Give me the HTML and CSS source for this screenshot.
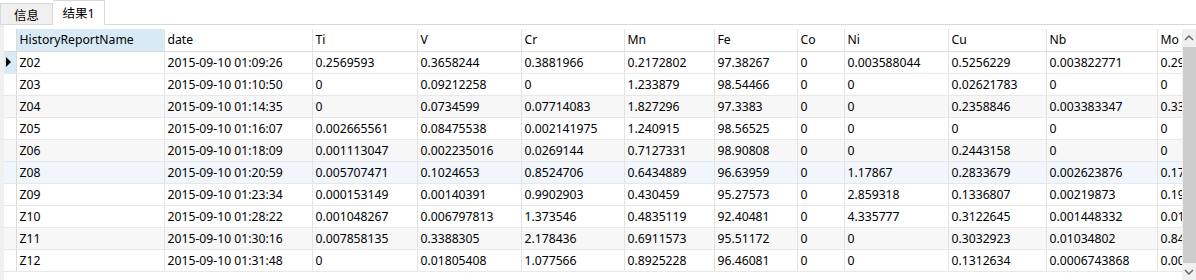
FILE: index.html
```html
<!DOCTYPE html>
<html lang="zh-CN">
<head>
  <meta charset="UTF-8" />
  <title>结果1</title>
  <link rel="stylesheet" href="styles.css">
</head>
<body>

  <div class="tabs">
    <div class="tab">信息</div>
    <div class="tab active">结果1</div>
    <div class="tab-fill"></div>
  </div>

  <div class="panel">
    <div class="grid-wrap">
      <table class="grid">
        <colgroup>
          <col style="width:12px"><col style="width:148px"><col style="width:148px">
          <col style="width:105px"><col style="width:104px"><col style="width:103px">
          <col style="width:90px"><col style="width:83px"><col style="width:47px">
          <col style="width:104px"><col style="width:98px"><col style="width:111px">
          <col style="width:100px">
        </colgroup>
        <thead>
          <tr>
            <th class="ind"></th>
            <th class="sel">HistoryReportName</th>
            <th>date</th><th>Ti</th><th>V</th><th>Cr</th><th>Mn</th><th>Fe</th>
            <th>Co</th><th>Ni</th><th>Cu</th><th>Nb</th><th>Mo</th>
          </tr>
        </thead>
        <tbody>
          <tr>
            <td class="ind cur"><span class="arrow"></span></td>
            <td>Z02</td><td>2015-09-10 01:09:26</td><td>0.2569593</td><td>0.3658244</td><td>0.3881966</td>
            <td>0.2172802</td><td>97.38267</td><td>0</td><td>0.003588044</td><td>0.5256229</td><td>0.003822771</td><td>0.29</td>
          </tr>
          <tr>
            <td class="ind"></td>
            <td>Z03</td><td>2015-09-10 01:10:50</td><td>0</td><td>0.09212258</td><td>0</td>
            <td>1.233879</td><td>98.54466</td><td>0</td><td>0</td><td>0.02621783</td><td>0</td><td>0</td>
          </tr>
          <tr class="alt">
            <td class="ind"></td>
            <td>Z04</td><td>2015-09-10 01:14:35</td><td>0</td><td>0.0734599</td><td>0.07714083</td>
            <td>1.827296</td><td>97.3383</td><td>0</td><td>0</td><td>0.2358846</td><td>0.003383347</td><td>0.33</td>
          </tr>
          <tr>
            <td class="ind"></td>
            <td>Z05</td><td>2015-09-10 01:16:07</td><td>0.002665561</td><td>0.08475538</td><td>0.002141975</td>
            <td>1.240915</td><td>98.56525</td><td>0</td><td>0</td><td>0</td><td>0</td><td>0</td>
          </tr>
          <tr class="alt">
            <td class="ind"></td>
            <td>Z06</td><td>2015-09-10 01:18:09</td><td>0.001113047</td><td>0.002235016</td><td>0.0269144</td>
            <td>0.7127331</td><td>98.90808</td><td>0</td><td>0</td><td>0.2443158</td><td>0</td><td>0</td>
          </tr>
          <tr class="hover">
            <td class="ind"></td>
            <td>Z08</td><td>2015-09-10 01:20:59</td><td>0.005707471</td><td>0.1024653</td><td>0.8524706</td>
            <td>0.6434889</td><td>96.63959</td><td>0</td><td>1.17867</td><td>0.2833679</td><td>0.002623876</td><td>0.17</td>
          </tr>
          <tr>
            <td class="ind"></td>
            <td>Z09</td><td>2015-09-10 01:23:34</td><td>0.000153149</td><td>0.00140391</td><td>0.9902903</td>
            <td>0.430459</td><td>95.27573</td><td>0</td><td>2.859318</td><td>0.1336807</td><td>0.00219873</td><td>0.19</td>
          </tr>
          <tr>
            <td class="ind"></td>
            <td>Z10</td><td>2015-09-10 01:28:22</td><td>0.001048267</td><td>0.006797813</td><td>1.373546</td>
            <td>0.4835119</td><td>92.40481</td><td>0</td><td>4.335777</td><td>0.3122645</td><td>0.001448332</td><td>0.01</td>
          </tr>
          <tr class="alt">
            <td class="ind"></td>
            <td>Z11</td><td>2015-09-10 01:30:16</td><td>0.007858135</td><td>0.3388305</td><td>2.178436</td>
            <td>0.6911573</td><td>95.51172</td><td>0</td><td>0</td><td>0.3032923</td><td>0.01034802</td><td>0.84</td>
          </tr>
          <tr>
            <td class="ind"></td>
            <td>Z12</td><td>2015-09-10 01:31:48</td><td>0</td><td>0.01805408</td><td>1.077566</td>
            <td>0.8925228</td><td>96.46081</td><td>0</td><td>0</td><td>0.1312634</td><td>0.0006743868</td><td>0.00</td>
          </tr>
        </tbody>
      </table>
    </div>

    <div class="vscroll">
      <div class="sb-btn">
        <svg width="10" height="6" viewBox="0 0 10 6"><path d="M1 5 L5 1 L9 5" fill="none" stroke="#606060" stroke-width="1.4"/></svg>
      </div>
      <div class="sb-thumb"></div>
      <div class="sb-btn">
        <svg width="10" height="6" viewBox="0 0 10 6"><path d="M1 1 L5 5 L9 1" fill="none" stroke="#606060" stroke-width="1.4"/></svg>
      </div>
    </div>
  </div>

</body>
</html>
```

FILE: styles.css
```css
body {
  margin: 0;
  font-family: 'Noto Sans', 'Noto Sans CJK SC', sans-serif;
  font-size: 12.2px;
  color: #000;
  background: #fff;
  overflow: hidden;
}

/* tab strip */
.tabs {
  display: flex;
  align-items: flex-end;
  height: 25px;
}

.tab {
  flex-shrink: 0;
  display: flex;
  align-items: center;
  justify-content: center;
  width: 53px;
  height: 22px;
  background: #f0f0f0;
  border: 1px solid #d9d9d9;
  font-size: 12.5px;
  white-space: nowrap;
  box-sizing: border-box;
}

.tab.active {
  width: 52px;
  height: 25px;
  background: #fff;
  border-left: none;
  border-bottom-color: #fff;
}

.tab-fill {
  flex: 1;
  border-bottom: 1px solid #d9d9d9;
}

/* grid panel */
.panel {
  display: flex;
  height: 255px;
  padding-top: 4px;
  box-sizing: border-box;
  border-left: 4px solid #f0f0f0;
}

.grid-wrap {
  flex: 1;
  overflow: hidden;
}

.grid {
  border-collapse: collapse;
  table-layout: fixed;
  width: 1253px;
}

.grid th,
.grid td {
  height: 22px;
  padding: 0 0 0 3px;
  text-align: left;
  font-weight: normal;
  white-space: nowrap;
  overflow: hidden;
  border-right: 1px solid #e3e3e3;
  border-bottom: 1px solid #e8e8e8;
  box-sizing: border-box;
}

.grid th {
  border-bottom: 1px solid #dcdcdc;
}

.grid th.sel {
  background: #d9eaf7;
}

.grid .ind {
  padding: 0;
  border-right: 1px solid #dadada;
}

.grid .ind.cur {
  background: #d9eaf7;
}

.arrow {
  display: block;
  width: 0;
  height: 0;
  margin-left: 2px;
  border-top: 5px solid transparent;
  border-bottom: 5px solid transparent;
  border-left: 5px solid #000;
}

.grid tr.alt td {
  background: #f7f7f7;
}

.grid tr.hover td {
  background: #f0f6fc;
}

/* vertical scrollbar */
.vscroll {
  width: 14px;
  background: #f0f0f0;
  display: flex;
  flex-direction: column;
}

.sb-btn {
  height: 17px;
  display: flex;
  align-items: center;
  justify-content: center;
}

.sb-thumb {
  flex: 1;
  background: #cdcdcd;
  margin: 1px 0 0 1px;
}
```
